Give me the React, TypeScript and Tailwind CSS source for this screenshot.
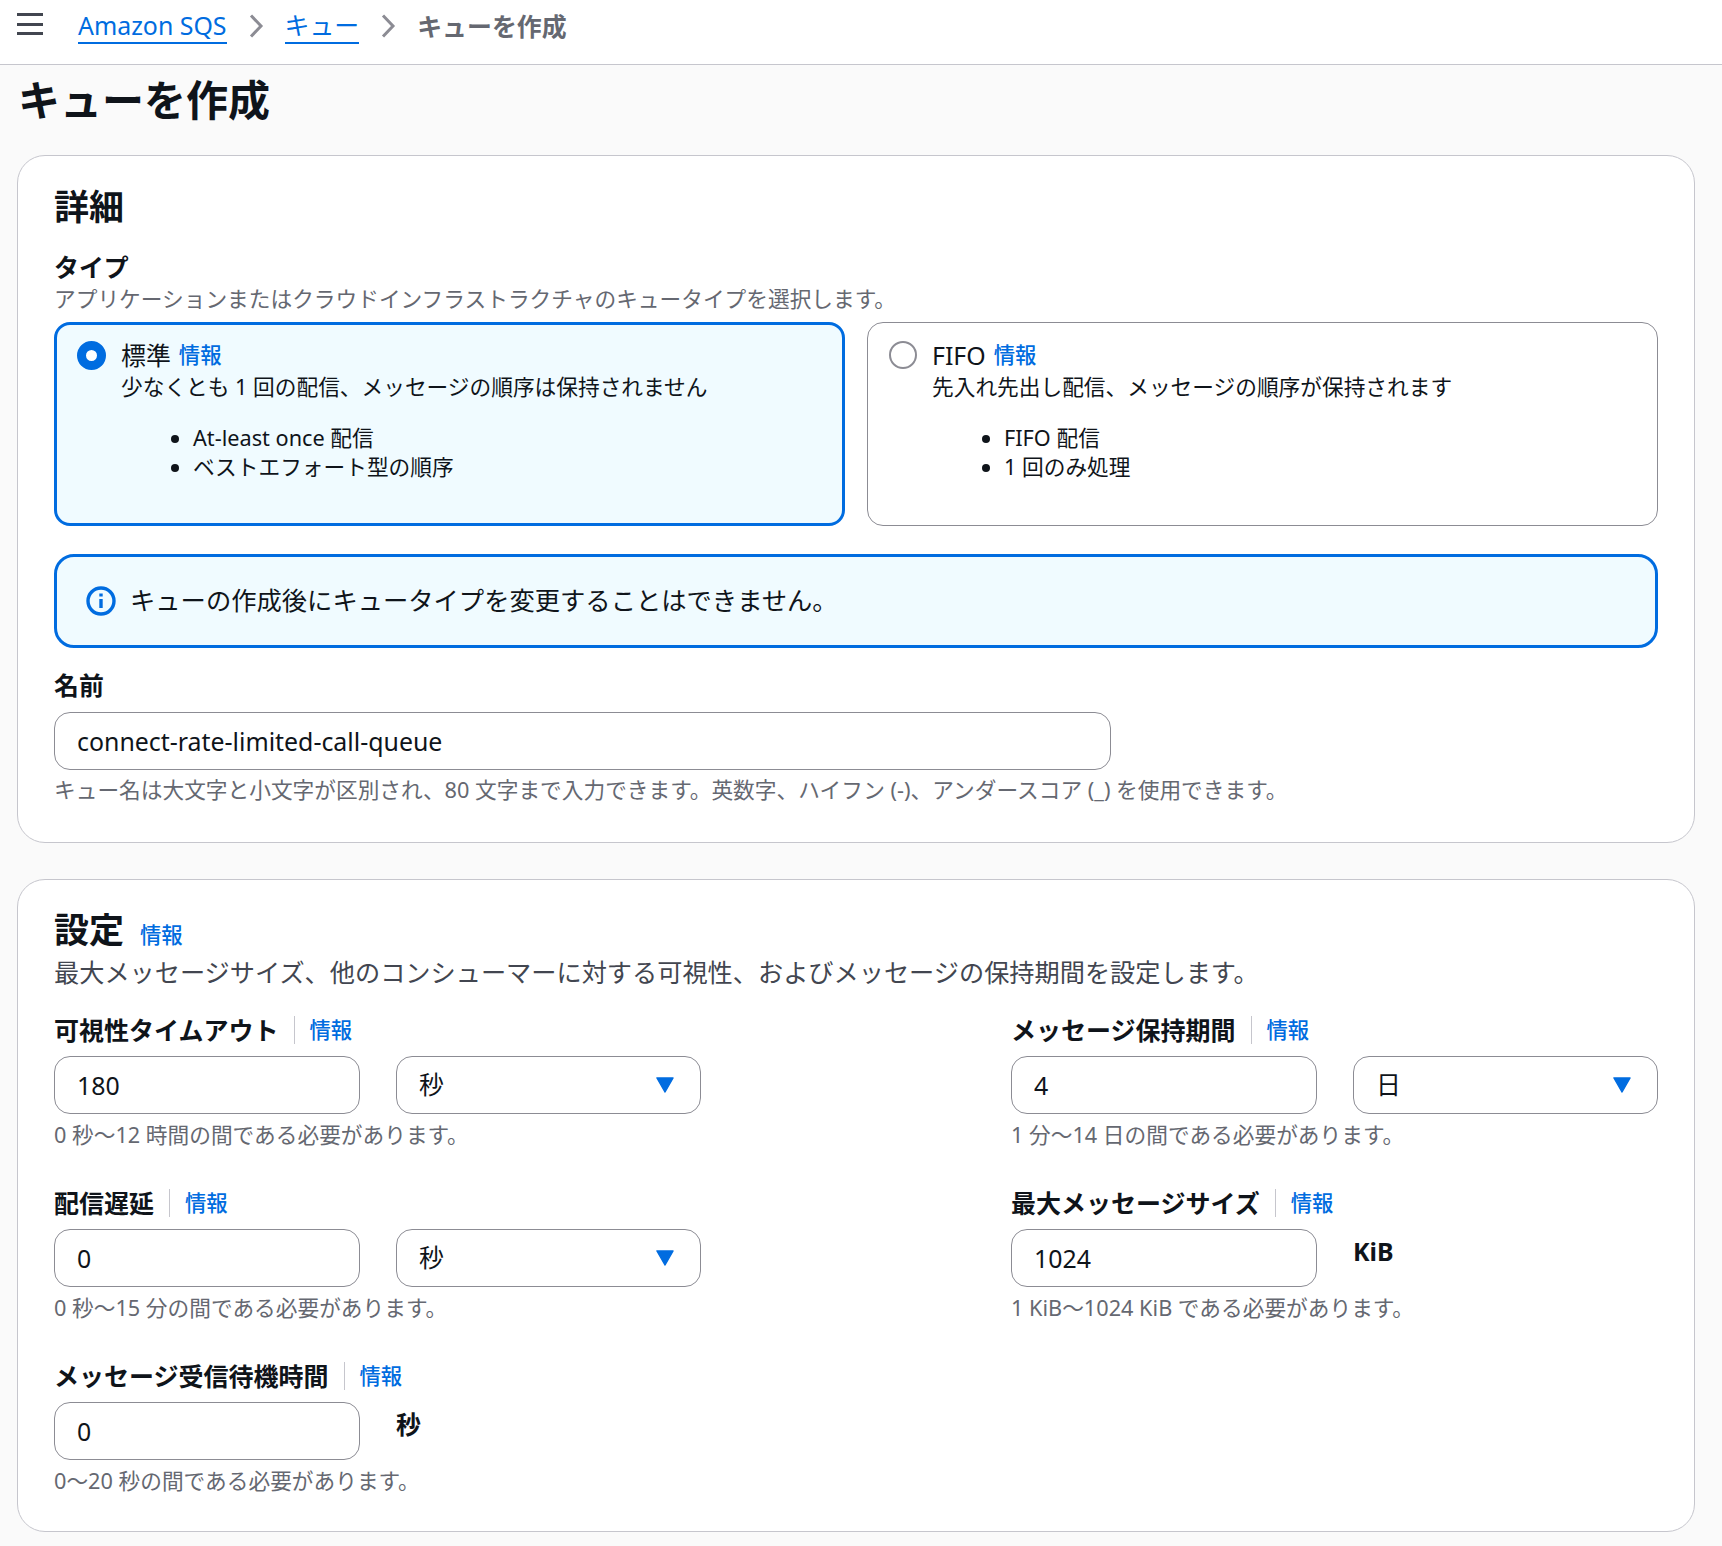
const font = "[font-family:'Noto_Sans','Noto_Sans_CJK_JP',sans-serif]";

function Info({ className = "" }: { className?: string }) {
  return <a className={`text-[21.35px] leading-[28px] font-medium text-[#006ce0] ${className}`}>情報</a>;
}

function Chevron() {
  return (
    <svg width="16" height="24" viewBox="0 0 16 24" fill="none" className="shrink-0">
      <path d="M3 1.5l10 10.5L3 22.5" stroke="#8c8c94" strokeWidth="3" />
    </svg>
  );
}

function Caret() {
  return (
    <svg width="18" height="16" viewBox="0 0 18 16" className="shrink-0">
      <path d="M1 1h16L9 15z" fill="#006ce0" stroke="#006ce0" strokeWidth="1.5" strokeLinejoin="round" />
    </svg>
  );
}

function TextInput({ value, className = "w-[306px]" }: { value: string; className?: string }) {
  return (
    <input
      readOnly
      value={value}
      className={`h-[58px] rounded-[16px] border border-[#8c8c94] bg-white px-[22px] text-[24.9px] text-[#0f141a] outline-none ${className}`}
    />
  );
}

function Select({ value }: { value: string }) {
  return (
    <div className="flex h-[58px] w-[305px] items-center justify-between rounded-[16px] border border-[#8c8c94] bg-white pl-[22px] pr-[26px] text-[24.9px] text-[#0f141a]">
      <span>{value}</span>
      <Caret />
    </div>
  );
}

function RadioCard({
  selected,
  title,
  desc,
  items,
}: {
  selected?: boolean;
  title: string;
  desc: string;
  items: string[];
}) {
  return (
    <div
      className={`flex h-[204px] rounded-[16px] ${
        selected
          ? "gap-[15px] border-[3px] border-[#006ce0] bg-[#f0fbff] pl-[20px] pt-[15px]"
          : "gap-[15px] border border-[#8c8c94] bg-white pl-[21px] pt-[17px]"
      }`}
    >
      {selected ? (
        <span className="mt-[1px] h-[29px] w-[29px] shrink-0 rounded-full border-[9px] border-[#006ce0] bg-white" />
      ) : (
        <span className="mt-[1px] h-[28px] w-[28px] shrink-0 rounded-full border-2 border-[#8c8c94] bg-white" />
      )}
      <div>
        <div className="flex items-center gap-[8px] text-[24.9px] leading-[30px] text-[#0f141a]">
          {title}
          <Info />
        </div>
        <p className="mt-[1px] text-[21.7px] leading-[31px] text-[#0f141a]">{desc}</p>
        <ul className="mt-[22px] list-disc pl-[72px] text-[21.7px] leading-[28.5px] text-[#0f141a]">
          {items.map((item) => (
            <li key={item}>{item}</li>
          ))}
        </ul>
      </div>
    </div>
  );
}

function FieldLabel({ label }: { label: string }) {
  return (
    <div className="flex h-[28px] items-center">
      <span className="text-[25px] leading-[28px] font-bold text-[#0f141a]">{label}</span>
      <span className="mx-[15px] h-[28px] w-px bg-[#c6c6cd]" />
      <Info />
    </div>
  );
}

function Field({
  label,
  value,
  unit,
  suffix,
  hint,
}: {
  label: string;
  value: string;
  unit?: string;
  suffix?: string;
  hint: string;
}) {
  return (
    <div className="h-[173px]">
      <FieldLabel label={label} />
      <div className="mt-[12px] flex gap-[36px]">
        <TextInput value={value} />
        {unit && <Select value={unit} />}
        {suffix && <span className="text-[24.9px] leading-[44px] font-bold text-[#0f141a]">{suffix}</span>}
      </div>
      <p className="mt-[7px] text-[21.7px] leading-[28px] text-[#656871]">{hint}</p>
    </div>
  );
}

export default function App() {
  return (
    <div className={`min-h-[1546px] bg-[#fafafa] ${font}`}>
      <nav className="flex h-[65px] items-start border-b border-[#c6c6cd] bg-white">
        <div className="ml-[17px] mt-[13px] flex w-[26px] flex-col gap-[6.5px]">
          <span className="h-[3px] bg-[#424650]" />
          <span className="h-[3px] bg-[#424650]" />
          <span className="h-[3px] bg-[#424650]" />
        </div>
        <div className="ml-[35px] mt-[8px] flex items-center text-[24.9px] leading-[34px]">
          <a className="border-b-2 border-[#006ce0] text-[#006ce0]">Amazon SQS</a>
          <span className="mx-[21px]">
            <Chevron />
          </span>
          <a className="border-b-2 border-[#006ce0] text-[#006ce0]">キュー</a>
          <span className="mx-[21px]">
            <Chevron />
          </span>
          <span className="font-bold text-[#656871]">キューを作成</span>
        </div>
      </nav>

      <h1 className="ml-[18px] mt-[8px] text-[42px] leading-[54px] font-bold text-[#0f141a]">キューを作成</h1>

      <section className="ml-[17px] mr-[27px] mt-[28px] h-[688px] rounded-[28px] border border-[#c6c6cd] bg-white px-[36px] pt-[28px]">
        <h2 className="text-[35px] leading-[46px] font-bold text-[#0f141a]">詳細</h2>
        <h3 className="mt-[21px] text-[24.9px] leading-[32px] font-bold text-[#0f141a]">タイプ</h3>
        <p className="mt-[2px] text-[21.7px] leading-[28px] text-[#656871]">
          アプリケーションまたはクラウドインフラストラクチャのキュータイプを選択します。
        </p>
        <div className="mt-[9px] grid grid-cols-2 gap-[22px]">
          <RadioCard
            selected
            title="標準"
            desc="少なくとも 1 回の配信、メッセージの順序は保持されません"
            items={["At-least once 配信", "ベストエフォート型の順序"]}
          />
          <RadioCard
            title="FIFO"
            desc="先入れ先出し配信、メッセージの順序が保持されます"
            items={["FIFO 配信", "1 回のみ処理"]}
          />
        </div>
        <div className="mt-[28px] flex h-[94px] items-center gap-[14px] rounded-[20px] border-[3px] border-[#006ce0] bg-[#f0fbff] pl-[29px]">
          <svg width="30" height="30" viewBox="0 0 30 30" fill="none" className="shrink-0">
            <circle cx="15" cy="15" r="13" stroke="#006ce0" strokeWidth="3.4" />
            <path d="M15 13v9" stroke="#006ce0" strokeWidth="3.4" />
            <path d="M15 7.5v3" stroke="#006ce0" strokeWidth="3.4" />
          </svg>
          <span className="text-[25.3px] text-[#0f141a]">キューの作成後にキュータイプを変更することはできません。</span>
        </div>
        <label className="mt-[20px] block text-[24.9px] leading-[34px] font-bold text-[#0f141a]">名前</label>
        <TextInput value="connect-rate-limited-call-queue" className="mt-[10px] block w-[1057px]" />
        <p className="mt-[6px] text-[21.7px] leading-[28px] text-[#656871]">
          キュー名は大文字と小文字が区別され、80 文字まで入力できます。英数字、ハイフン (-)、アンダースコア (_) を使用できます。
        </p>
      </section>

      <section className="ml-[17px] mr-[27px] mt-[36px] h-[653px] rounded-[28px] border border-[#c6c6cd] bg-white px-[36px] pt-[27px]">
        <div className="flex items-end gap-[16px]">
          <h2 className="text-[35px] leading-[46px] font-bold text-[#0f141a]">設定</h2>
          <Info className="mb-[4px]" />
        </div>
        <p className="mt-[1px] text-[25.2px] leading-[36px] text-[#424650]">
          最大メッセージサイズ、他のコンシューマーに対する可視性、およびメッセージの保持期間を設定します。
        </p>
        <div className="mt-[26px] grid grid-cols-[647px_647px] justify-between">
          <div>
            <Field label="可視性タイムアウト" value="180" unit="秒" hint="0 秒〜12 時間の間である必要があります。" />
            <Field label="配信遅延" value="0" unit="秒" hint="0 秒〜15 分の間である必要があります。" />
            <Field label="メッセージ受信待機時間" value="0" suffix="秒" hint="0〜20 秒の間である必要があります。" />
          </div>
          <div>
            <Field label="メッセージ保持期間" value="4" unit="日" hint="1 分〜14 日の間である必要があります。" />
            <Field label="最大メッセージサイズ" value="1024" suffix="KiB" hint="1 KiB〜1024 KiB である必要があります。" />
          </div>
        </div>
      </section>
    </div>
  );
}
